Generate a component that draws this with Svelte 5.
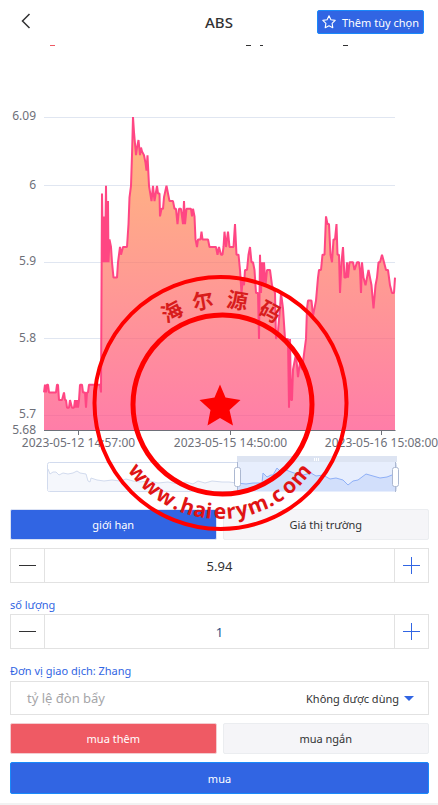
<script>
  let price = '5.94'
  let amount = '1'
  let orderType = 'limit'
  let side = 'long'
  let leverage = 'none'

  const points = [
    [44, 5.73], [45, 5.74], [46, 5.73], [47, 5.74], [48, 5.74], [49, 5.73], [56, 5.73], [57, 5.74],
    [58, 5.74], [59, 5.72], [62, 5.72], [64, 5.73], [65, 5.72], [66, 5.72], [67, 5.71], [69, 5.71],
    [70, 5.72], [72, 5.71], [74, 5.71], [75, 5.72], [76, 5.71], [77, 5.72], [78, 5.71], [79, 5.72],
    [80, 5.74], [82, 5.74], [83, 5.73], [85, 5.73], [86, 5.71], [87, 5.73], [88, 5.73], [89, 5.74],
    [100, 5.74], [101, 5.73], [102, 5.99], [103, 5.9], [104, 5.96], [105, 5.9], [106, 6.0],
    [107, 5.9], [108, 5.98], [108.5, 5.9], [109.5, 5.93], [111, 5.92], [112, 5.9], [113.5, 5.88],
    [117, 5.88], [118, 5.9], [119, 5.91], [120, 5.92], [121, 5.91], [123, 5.92], [127, 5.92],
    [128.5, 5.95], [129.5, 5.985], [131, 6.0], [132, 6.04], [133, 6.09], [134, 6.07], [136, 6.04],
    [137, 6.05], [138.5, 6.06], [140, 6.04], [141, 6.05], [142, 6.045], [144, 6.04], [145.5, 6.03],
    [146.5, 6.02], [147.5, 6.04], [149, 6.0], [151.5, 5.98], [153, 6.0], [154.5, 5.98], [157, 6.0],
    [158, 5.99], [159.5, 5.99], [160, 5.96], [161.5, 5.97], [163, 5.97], [164, 5.985], [166.5, 6.0],
    [168, 5.99], [169.5, 5.98], [173, 5.98], [174.5, 5.97], [176, 5.97], [177.5, 5.95], [179, 5.97],
    [181, 5.97], [183, 5.95], [184, 5.98], [185, 5.95], [186.5, 5.97], [191, 5.97], [192, 5.96],
    [193, 5.97], [194.5, 5.96], [195.5, 5.93], [197, 5.92], [198, 5.93], [200.5, 5.93],
    [201.5, 5.94], [202.5, 5.93], [208, 5.93], [209.5, 5.92], [216, 5.92], [217.5, 5.91],
    [219, 5.92], [221, 5.91], [222.5, 5.91], [223.5, 5.92], [224.5, 5.94], [226, 5.92], [228, 5.94],
    [229.5, 5.92], [233.5, 5.92], [235, 5.95], [236.5, 5.91], [238.5, 5.91], [240, 5.89],
    [241.5, 5.86], [243, 5.88], [244, 5.87], [245, 5.89], [247, 5.89], [248.5, 5.91], [250, 5.92],
    [251.5, 5.9], [253, 5.9], [254.5, 5.89], [256, 5.86], [258, 5.86], [259, 5.8], [260, 5.91],
    [261, 5.86], [262, 5.9], [263, 5.87], [264, 5.9], [265.5, 5.87], [267, 5.89], [270, 5.89],
    [272, 5.87], [275, 5.86], [276, 5.8], [278, 5.81], [280, 5.84], [281, 5.86], [282, 5.85],
    [283, 5.84], [285, 5.8], [288, 5.8], [289, 5.71], [290, 5.8], [291, 5.72], [292, 5.72],
    [293, 5.76], [296, 5.78], [298, 5.75], [300, 5.77], [302, 5.76], [304, 5.78], [306, 5.8],
    [307, 5.84], [308, 5.85], [311.5, 5.85], [313, 5.83], [316, 5.85], [318, 5.88], [319, 5.89],
    [321, 5.89], [322.5, 5.91], [324.5, 5.91], [326, 5.96], [327.5, 5.95], [329, 5.95],
    [330.5, 5.91], [332, 5.9], [333.5, 5.93], [335, 5.93], [336.5, 5.95], [337.5, 5.91],
    [339, 5.91], [340, 5.86], [341.5, 5.9], [343, 5.92], [344.5, 5.88], [346, 5.88], [347, 5.9],
    [348, 5.88], [349.5, 5.9], [353, 5.9], [354.5, 5.89], [357, 5.9], [359, 5.9], [360, 5.89],
    [361, 5.86], [362, 5.9], [363.5, 5.88], [365.5, 5.87], [368.5, 5.89], [370, 5.88],
    [371.5, 5.87], [373.5, 5.84], [375.5, 5.87], [377, 5.88], [378.5, 5.9], [380, 5.9],
    [382, 5.91], [384, 5.9], [386, 5.89], [388, 5.89], [390, 5.87], [392, 5.86], [394, 5.86],
    [395, 5.88]
  ]

  const yTicks = [6.09, 6, 5.9, 5.8, 5.7, 5.68]
  const xTicks = [
    { x: 78.5, label: '2023-05-12 14:57:00' },
    { x: 230.5, label: '2023-05-15 14:50:00' },
    { x: 381.5, label: '2023-05-16 15:08:00' }
  ]

  const toY = value => 117 + (6.09 - value) * 765
  const line = points.map(([x, v]) => `${x},${toY(v).toFixed(1)}`).join(' ')
  const area = `44,430 ${line} 395,430`

  const history =
    '48,469 50,474 53,472 56,472 59,475 63,473 68,474 73,473 77,471 80,473 86,474 88,481 90,482 91,478 97,480 104,481 112,480 120,481 126,479 133,481 140,482 150,481 158,483 168,482 178,484 186,482 193,484 198,481 205,483 212,481 222,482 229,482 237,483'
  const recent =
    '237,483 246,484 253,483 262,483 263,473 265,475 267,477 271,475 273,475 277,468 280,471 286,470 294,473 303,475 311,473 316,476 323,475 330,479 336,478 343,480 348,485 353,481 358,480 366,474 373,476 380,478 387,477 392,475 396,474'

  // angle of each glyph around the stamp centre
  const topGlyphs = [['海', -28], ['尔', -10], ['源', 9], ['码', 28]]
  const bottomGlyphs = [
    ['w', 51], ['w', 41], ['w', 31], ['.', 24], ['h', 18], ['a', 11], ['i', 6], ['e', 0],
    ['r', -6], ['y', -12], ['m', -21], ['.', -28], ['c', -33], ['o', -41], ['m', -50]
  ]

  function step(value, by, digits) {
    return Math.max(0, Number(value) + by).toFixed(digits)
  }
</script>

<div class="page">
  <header>
    <button class="back" aria-label="Back">
      <svg width="12" height="18" viewBox="0 0 12 18">
        <path d="M9.5 1 2.5 8l7 7" fill="none" stroke="#323233" stroke-width="1.5" />
      </svg>
    </button>
    <h1>ABS</h1>
    <button class="favourite">
      <svg width="14" height="14" viewBox="0 0 14 14">
        <path
          d="M7 .8 8.9 4.8l4.3.6-3.1 3 .7 4.3L7 10.7l-3.800 2 .7-4.300-3.100-3 4.300-.6Z"
          fill="none"
          stroke="#fff"
          stroke-width="1.1"
          stroke-linejoin="round"
        />
      </svg>
      Thêm tùy chọn
    </button>
  </header>

  <main>
    <svg class="chart" viewBox="0 45 438 464">
      <defs>
        <linearGradient id="fill" x1="0" y1="0" x2="0" y2="1">
          <stop offset="0" stop-color="#ff9e44" />
          <stop offset="1" stop-color="#ff4683" />
        </linearGradient>
      </defs>
      <path d="M50 45.5h5" stroke="#ee5a64" />
      <path d="M246 45.5h5M260 45.5h3M343 45.5h5" stroke="#323233" />

      {#each yTicks as tick}
        {#if tick !== 5.68}
          <path d="M44 {Math.floor(toY(tick)) + 0.5}H395" stroke="#e0e6f1" />
        {/if}
        <text class="axis" x="36" y={toY(tick) + 3} text-anchor="end">{tick}</text>
      {/each}

      <polygon points={area} fill="url(#fill)" opacity="0.7" />
      <polyline points={line} fill="none" stroke="#ff4683" stroke-width="2" stroke-linejoin="bevel" />

      <path d="M44 430.5H395.5" stroke="#6e7079" />
      {#each xTicks as tick}
        <path d="M{tick.x} 430v5" stroke="#6e7079" />
        <text class="axis" x={tick.x} y="447" text-anchor="middle">{tick.label}</text>
      {/each}

      <rect x="47.5" y="462.5" width="349" height="29" rx="2" fill="#fff" stroke="#d2dbee" />
      <polygon points="48,491 {history} 237,491" fill="#f5f7fc" />
      <polyline points={history} fill="none" stroke="#d2dbee" />
      <rect x="237" y="456" width="160" height="6" fill="#dde4f2" />
      <rect x="237" y="462" width="159" height="30" fill="#e7eefd" />
      <polygon points="237,491 {recent} 396,491" fill="#d2dffb" />
      <polyline points={recent} fill="none" stroke="#8fb0f7" />
      <path d="M314.5 458v3M316.5 458v3M318.5 458v3" stroke="#fff" />
      <path d="M237.5 462v30M395.5 462v30" stroke="#acb8d1" />
      <rect x="234.5" y="467.5" width="6" height="19" rx="2" fill="#fff" stroke="#acb8d1" />
      <rect x="392.5" y="467.5" width="6" height="19" rx="2" fill="#fff" stroke="#acb8d1" />
    </svg>

    <svg class="stamp" viewBox="0 45 438 490">
      <g fill="none" stroke="#f00">
        <circle cx="220.5" cy="403" r="126" stroke-width="4" />
        <circle cx="222.5" cy="404.5" r="89.5" stroke-width="5" />
      </g>
      <path
        d="M220 384.5 225.5 397.5 240.5 400 229.5 410 233 425.5 220 418 207.5 425.5 210.5 410 199.5 400 214.5 397.5Z"
        fill="#f00"
      />
      {#each topGlyphs as [glyph, angle]}
        <text class="seal han" x="221" y="307" transform="rotate({angle} 221 404)">{glyph}</text>
      {/each}
      {#each bottomGlyphs as [glyph, angle]}
        <text class="seal" x="220" y="519" transform="rotate({angle} 220 407)">{glyph}</text>
      {/each}
    </svg>

    <form on:submit|preventDefault>
      <div class="pair">
        <button type="button" class:blue={orderType === 'limit'} on:click={() => (orderType = 'limit')}>
          giới hạn
        </button>
        <button type="button" class:blue={orderType === 'market'} on:click={() => (orderType = 'market')}>
          Giá thị trường
        </button>
      </div>

      <div class="stepper">
        <button type="button" class="minus" aria-label="Giảm giá" on:click={() => (price = step(price, -0.01, 2))}></button>
        <input bind:value={price} aria-label="Giá" inputmode="decimal" />
        <button type="button" class="plus" aria-label="Tăng giá" on:click={() => (price = step(price, 0.01, 2))}></button>
      </div>

      <label class="caption" for="amount">số lượng</label>
      <div class="stepper">
        <button type="button" class="minus" aria-label="Giảm số lượng" on:click={() => (amount = step(amount, -1, 0))}></button>
        <input id="amount" class="amount" bind:value={amount} inputmode="numeric" />
        <button type="button" class="plus" aria-label="Tăng số lượng" on:click={() => (amount = step(amount, 1, 0))}></button>
      </div>

      <p class="caption">Đơn vị giao dịch: Zhang</p>
      <div class="leverage">
        <label for="leverage">tỷ lệ đòn bẩy</label>
        <select id="leverage" bind:value={leverage}>
          <option value="none">Không được dùng</option>
        </select>
        <span class="arrow"></span>
      </div>

      <div class="pair">
        <button type="button" class:red={side === 'long'} on:click={() => (side = 'long')}>mua thêm</button>
        <button type="button" class:red={side === 'short'} on:click={() => (side = 'short')}>mua ngắn</button>
      </div>
      <button class="submit">mua</button>
    </form>
  </main>
</div>

<style>
  :global(body) {
    margin: 0;
    background: #fff;
  }
  .page {
    font-family: 'Noto Sans', 'Open Sans', sans-serif;
    font-size: 11px;
    color: #323233;
    overflow: hidden;
    border-bottom: 2px solid #f2f2f2;
  }
  button,
  input,
  select {
    box-sizing: border-box;
    margin: 0;
    padding: 0;
    font: inherit;
    color: inherit;
  }
  button {
    cursor: pointer;
  }
  header {
    display: grid;
    grid-template-columns: 1fr auto 1fr;
    align-items: center;
    height: 44px;
    padding: 0 14px;
  }
  h1 {
    margin: 0;
    font-size: 15px;
    font-weight: 500;
  }
  .back {
    justify-self: start;
    width: 24px;
    height: 20px;
    border: 0;
    background: none;
    line-height: 0;
  }
  .favourite {
    justify-self: end;
    display: flex;
    align-items: center;
    gap: 6px;
    height: 24px;
    padding: 0 4px;
    border: 1px solid #1989fa;
    border-radius: 2px;
    background: #3165e3;
    color: #fff;
    white-space: nowrap;
  }
  main {
    position: relative;
    padding-top: 1px;
  }
  .chart {
    display: block;
    width: 100%;
  }
  .axis {
    font-size: 12px;
    fill: #6e7079;
  }
  .stamp {
    position: absolute;
    top: 1px;
    left: 0;
    width: 100%;
    pointer-events: none;
  }
  .seal {
    font: 700 21px 'Open Sans', sans-serif;
    fill: #e01414;
    text-anchor: middle;
  }
  .han {
    font: 700 21px 'Noto Sans CJK SC', sans-serif;
    fill: #d81c1c;
  }
  form {
    padding: 0 9px 9px 10px;
  }
  .pair {
    display: grid;
    grid-template-columns: 1fr 1fr;
    gap: 6px;
    margin-bottom: 8px;
  }
  .pair button {
    height: 31px;
    border: 1px solid #ebedf0;
    border-radius: 2px;
    background: #f5f5f8;
  }
  .pair .blue {
    border-color: #dbe2f4;
    background: #3165e3;
    color: #fff;
  }
  .pair .red {
    border-color: #f3ccd0;
    background: #ef5a64;
    color: #fff;
  }
  .stepper {
    display: flex;
    box-sizing: border-box;
    height: 35px;
    border: 1px solid #e2e2e2;
  }
  .stepper input {
    flex: 1;
    min-width: 0;
    border: 0;
    font-size: 13px;
    text-align: center;
  }
  .stepper .amount {
    color: #2a5185;
  }
  .stepper button {
    width: 34px;
    border: 0;
  }
  .stepper .minus {
    border-right: 1px solid #e2e2e2;
    background: linear-gradient(#323233, #323233) center / 17px 1px no-repeat;
  }
  .stepper .plus {
    border-left: 1px solid #e2e2e2;
    background:
      linear-gradient(#3165e3, #3165e3) center / 17px 1px no-repeat,
      linear-gradient(#3165e3, #3165e3) center / 1px 17px no-repeat;
  }
  .caption {
    display: block;
    margin: 13px 0 0;
    line-height: 18px;
    color: #3165e3;
  }
  .leverage {
    display: flex;
    align-items: center;
    box-sizing: border-box;
    height: 34px;
    margin: 1px 0 8px;
    padding: 0 14px 0 16px;
    border: 1px solid #e2e2e2;
  }
  .leverage label {
    font-size: 13px;
    color: #a5a5a8;
  }
  select {
    flex: 1;
    appearance: none;
    border: 0;
    background: none;
    text-align: right;
    text-align-last: right;
  }
  .arrow {
    margin-left: 5px;
    border: 5px solid transparent;
    border-top-color: #3165e3;
    border-bottom: 0;
  }
  .submit {
    width: 100%;
    height: 32px;
    border: 1px solid #1989fa;
    border-radius: 2px;
    background: #3165e3;
    color: #fff;
  }
</style>
